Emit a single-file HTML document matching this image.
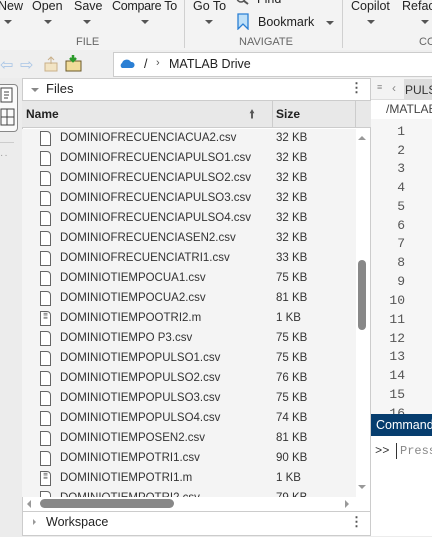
<!DOCTYPE html>
<html><head><style>
*{margin:0;padding:0;box-sizing:border-box}
body{width:432px;height:537px;overflow:hidden;background:#ececec;font-family:"Liberation Sans",sans-serif;font-size:12px;color:#222;position:relative}
.a{position:absolute;white-space:nowrap}
.tri{position:absolute;width:0;height:0;border-left:4px solid transparent;border-right:4px solid transparent;border-top:4px solid #555}
.row{position:absolute;left:38px;height:20px;width:316px}
.fi{position:absolute;left:2px;top:2px;width:11px;height:15px;border:1px solid #666;border-radius:0 4px 0 0;background:#fff}
.nm{position:absolute;left:22px;top:3px;font-size:11.5px;color:#333}
.sz{position:absolute;left:238px;top:3px;font-size:11.5px;color:#333}
.ln{position:absolute;right:27px;font-family:"Liberation Mono",monospace;font-size:13px;color:#555}
</style></head><body>
<div class="a" style="left:0;top:0;width:432px;height:50px;background:#f3f3f3"></div>
<div class="a" style="left:-2px;top:-1px;font-size:12.5px">New</div>
<div class="a" style="left:32px;top:-1px;font-size:12.5px">Open</div>
<div class="a" style="left:74px;top:-1px;font-size:12.5px">Save</div>
<div class="a" style="left:112px;top:-1px;font-size:12.5px;letter-spacing:-0.3px">Compare To</div>
<div class="tri" style="left:4px;top:20px"></div><div class="tri" style="left:44px;top:20px"></div><div class="tri" style="left:83px;top:20px"></div><div class="tri" style="left:141px;top:20px"></div>
<div class="a" style="left:76px;top:36px;font-size:11px;color:#666">FILE</div>
<div class="a" style="left:184px;top:0;width:1px;height:48px;background:#d0d0d0"></div>
<div class="a" style="left:193px;top:-1px;font-size:12.5px">Go To</div>
<div class="tri" style="left:205px;top:20px"></div>
<div class="a" style="left:257px;top:-8px;font-size:12.5px">Find</div>
<svg class="a" style="left:236px;top:-4px" width="14" height="10"><circle cx="5" cy="2" r="4" fill="none" stroke="#555" stroke-width="1.5"/><line x1="8" y1="5" x2="12" y2="8" stroke="#555" stroke-width="2"/></svg>
<svg class="a" style="left:237px;top:13px" width="12" height="17"><path d="M1 1H11V16L6 11L1 16Z" fill="#bfe0f8" stroke="#2a7fd4" stroke-width="1.3"/></svg>
<div class="a" style="left:258px;top:15px;font-size:12.5px">Bookmark</div>
<div class="tri" style="left:326px;top:21px"></div>
<div class="a" style="left:239px;top:36px;font-size:11px;color:#666">NAVIGATE</div>
<div class="a" style="left:342px;top:0;width:1px;height:48px;background:#d0d0d0"></div>
<div class="a" style="left:351px;top:-1px;font-size:12.5px">Copilot</div>
<div class="tri" style="left:367px;top:20px"></div>
<div class="a" style="left:402px;top:-1px;font-size:12.5px">Refactor</div>
<div class="tri" style="left:421px;top:20px"></div>
<div class="a" style="left:419px;top:36px;font-size:11px;color:#666">CO</div>
<div class="a" style="left:0;top:50px;width:432px;height:28px;background:#efefef"></div>
<div class="a" style="left:0px;top:55px;font-size:16px;color:#aac6e6">⇦</div>
<div class="a" style="left:20px;top:55px;font-size:16px;color:#aac6e6">⇨</div>
<svg class="a" style="left:44px;top:56px" width="14" height="16"><rect x="1" y="7" width="12" height="8" fill="#f2e4c4" stroke="#c9b08a"/><path d="M7 1V8M4 4L7 1L10 4" stroke="#c9b08a" fill="none"/></svg>
<svg class="a" style="left:65px;top:54px" width="18" height="18"><rect x="1" y="7" width="15" height="10" fill="#f1dc9a" stroke="#6b5a2a"/><path d="M8 1V7M5 4L8 7L11 4" stroke="#2a9a2a" stroke-width="2.5" fill="none"/></svg>
<div class="a" style="left:113px;top:52px;width:319px;height:25px;background:#fff;border:1px solid #ccc;border-right:none"></div>
<svg class="a" style="left:119px;top:59px" width="16" height="10"><path d="M3 9A3 3 0 0 1 3 4A5 5 0 0 1 12 3A3 3 0 0 1 13 9Z" fill="#2a7fd4"/></svg>
<div class="a" style="left:144px;top:57px;font-size:12.5px">/</div>
<div class="a" style="left:156px;top:57px;font-size:11px;color:#555">›</div>
<div class="a" style="left:169px;top:57px;font-size:12.5px;color:#222">MATLAB Drive</div>
<div class="a" style="left:0;top:84px;width:18px;height:48px;border:1px solid #888;border-left:none;border-radius:0 4px 4px 0;background:#fafafa"></div>
<svg class="a" style="left:0;top:87px" width="16" height="42"><rect x="1" y="1" width="11" height="14" fill="#fff" stroke="#444"/><path d="M4 5H9M4 8H9M4 11H8" stroke="#444"/><rect x="1" y="22" width="13" height="16" fill="none" stroke="#444"/><path d="M1 30H14M7 22V38" stroke="#444"/></svg>
<div class="a" style="left:0;top:142px;width:14px;height:1px;background:#ccc"></div>
<div class="a" style="left:0;top:150px;font-size:10px;color:#999;letter-spacing:1px">··</div>
<div class="a" style="left:22px;top:78px;width:349px;height:458px;background:#fff;border:1px solid #ccc"></div>
<div class="tri" style="left:31px;top:88px;border-top-color:#888"></div>
<div class="a" style="left:46px;top:81px;font-size:13px">Files</div>
<div class="a" style="left:350px;top:80px;font-size:13px;color:#555;font-weight:bold">⋮</div>
<div class="a" style="left:22px;top:100px;width:349px;height:28px;background:#e8e8e8;border-top:1px solid #ccc;border-bottom:1px solid #ccc"></div>
<div class="a" style="left:26px;top:107px;font-weight:bold;font-size:12px">Name</div>
<div class="a" style="left:249px;top:105px;font-size:12px;color:#555">🠙</div>
<div class="a" style="left:272px;top:101px;width:1px;height:27px;background:#ccc"></div>
<div class="a" style="left:276px;top:107px;font-weight:bold;font-size:12px">Size</div>
<div class="a" style="left:355px;top:101px;width:1px;height:27px;background:#ccc"></div>
<div class="a" style="left:22px;top:129px;width:334px;height:368px;background:#f4f4f4"></div>
<div class="a" style="left:356px;top:129px;width:14px;height:368px;background:#fff"></div>
<div class="a" style="left:358px;top:136px;border-left:4px solid transparent;border-right:4px solid transparent;border-bottom:4px solid #999"></div>
<div class="a" style="left:358px;top:260px;width:8px;height:70px;background:#888;border-radius:4px"></div>
<div class="a" style="left:358px;top:485px;border-left:4px solid transparent;border-right:4px solid transparent;border-top:4px solid #999"></div>
<div style="position:absolute;left:0;top:0;width:356px;height:497px;overflow:hidden">
<div class="row" style="top:129px"><div class="fi"></div><div class="nm">DOMINIOFRECUENCIACUA2.csv</div><div class="sz">32 KB</div></div>
<div class="row" style="top:149px"><div class="fi"></div><div class="nm">DOMINIOFRECUENCIAPULSO1.csv</div><div class="sz">32 KB</div></div>
<div class="row" style="top:169px"><div class="fi"></div><div class="nm">DOMINIOFRECUENCIAPULSO2.csv</div><div class="sz">32 KB</div></div>
<div class="row" style="top:189px"><div class="fi"></div><div class="nm">DOMINIOFRECUENCIAPULSO3.csv</div><div class="sz">32 KB</div></div>
<div class="row" style="top:209px"><div class="fi"></div><div class="nm">DOMINIOFRECUENCIAPULSO4.csv</div><div class="sz">32 KB</div></div>
<div class="row" style="top:229px"><div class="fi"></div><div class="nm">DOMINIOFRECUENCIASEN2.csv</div><div class="sz">32 KB</div></div>
<div class="row" style="top:249px"><div class="fi"></div><div class="nm">DOMINIOFRECUENCIATRI1.csv</div><div class="sz">33 KB</div></div>
<div class="row" style="top:269px"><div class="fi"></div><div class="nm">DOMINIOTIEMPOCUA1.csv</div><div class="sz">75 KB</div></div>
<div class="row" style="top:289px"><div class="fi"></div><div class="nm">DOMINIOTIEMPOCUA2.csv</div><div class="sz">81 KB</div></div>
<div class="row" style="top:309px"><div class="fi" style="font-size:8px;line-height:4px;color:#555;text-align:center">≡<br>≡</div><div class="nm">DOMINIOTIEMPOOTRI2.m</div><div class="sz">1 KB</div></div>
<div class="row" style="top:329px"><div class="fi"></div><div class="nm">DOMINIOTIEMPO P3.csv</div><div class="sz">75 KB</div></div>
<div class="row" style="top:349px"><div class="fi"></div><div class="nm">DOMINIOTIEMPOPULSO1.csv</div><div class="sz">75 KB</div></div>
<div class="row" style="top:369px"><div class="fi"></div><div class="nm">DOMINIOTIEMPOPULSO2.csv</div><div class="sz">76 KB</div></div>
<div class="row" style="top:389px"><div class="fi"></div><div class="nm">DOMINIOTIEMPOPULSO3.csv</div><div class="sz">75 KB</div></div>
<div class="row" style="top:409px"><div class="fi"></div><div class="nm">DOMINIOTIEMPOPULSO4.csv</div><div class="sz">74 KB</div></div>
<div class="row" style="top:429px"><div class="fi"></div><div class="nm">DOMINIOTIEMPOSEN2.csv</div><div class="sz">81 KB</div></div>
<div class="row" style="top:449px"><div class="fi"></div><div class="nm">DOMINIOTIEMPOTRI1.csv</div><div class="sz">90 KB</div></div>
<div class="row" style="top:469px"><div class="fi" style="font-size:8px;line-height:4px;color:#555;text-align:center">≡<br>≡</div><div class="nm">DOMINIOTIEMPOTRI1.m</div><div class="sz">1 KB</div></div>
<div class="row" style="top:489px"><div class="fi"></div><div class="nm">DOMINIOTIEMPOTRI2.csv</div><div class="sz">79 KB</div></div>
</div>
<div class="a" style="left:23px;top:497px;width:347px;height:15px;background:#fff;border-bottom:1px solid #ccc"></div>
<div class="a" style="left:27px;top:500px;border-top:4px solid transparent;border-bottom:4px solid transparent;border-right:4px solid #999"></div>
<div class="a" style="left:40px;top:499px;width:134px;height:9px;background:#888;border-radius:5px"></div>
<div class="a" style="left:345px;top:500px;border-top:4px solid transparent;border-bottom:4px solid transparent;border-left:4px solid #999"></div>
<div class="a" style="left:33px;top:519px;border-top:3px solid transparent;border-bottom:3px solid transparent;border-left:3px solid #999"></div>
<div class="a" style="left:46px;top:515px;font-size:12.5px">Workspace</div>
<div class="a" style="left:350px;top:514px;font-size:13px;color:#555;font-weight:bold">⋮</div>
<div class="a" style="left:371px;top:78px;width:61px;height:337px;background:#fff;border-top:1px solid #ccc"></div>
<div class="a" style="left:371px;top:78px;width:61px;height:22px;background:#f3f3f3;border-bottom:1px solid #ddd"></div>
<div class="a" style="left:377px;top:82px;font-size:9px;color:#888">≡</div>
<div class="a" style="left:392px;top:81px;font-size:12px;color:#888">‹</div>
<div class="a" style="left:404px;top:79px;width:28px;height:21px;background:#ddd"></div>
<div class="a" style="left:405px;top:83px;font-size:12px;color:#333">PULS</div>
<div class="a" style="left:386px;top:102px;font-size:12px;color:#444">/MATLAB</div>
<div class="a" style="left:371px;top:119px;width:61px;height:296px;background:#f6f6f6;overflow:hidden">
<div class="ln" style="top:5px">1</div><div class="ln" style="top:24px">2</div><div class="ln" style="top:42px">3</div><div class="ln" style="top:61px">4</div><div class="ln" style="top:80px">5</div><div class="ln" style="top:99px">6</div><div class="ln" style="top:117px">7</div><div class="ln" style="top:136px">8</div><div class="ln" style="top:155px">9</div><div class="ln" style="top:174px">10</div><div class="ln" style="top:193px">11</div><div class="ln" style="top:212px">12</div><div class="ln" style="top:230px">13</div><div class="ln" style="top:249px">14</div><div class="ln" style="top:268px">15</div><div class="ln" style="top:287px">16</div>
</div>
<div class="a" style="left:371px;top:414px;width:61px;height:22px;background:#063d6e"></div>
<div class="a" style="left:376px;top:418px;font-size:12.5px;color:#fff">Command</div>
<div class="a" style="left:371px;top:436px;width:61px;height:100px;background:#fff"></div>
<div class="a" style="left:375px;top:444px;font-family:'Liberation Mono',monospace;font-size:12px;color:#333">&gt;&gt;</div>
<div class="a" style="left:396px;top:443px;width:1px;height:16px;background:#333"></div>
<div class="a" style="left:400px;top:444px;font-family:'Liberation Mono',monospace;font-size:12px;color:#888">Press</div>
</body></html>
